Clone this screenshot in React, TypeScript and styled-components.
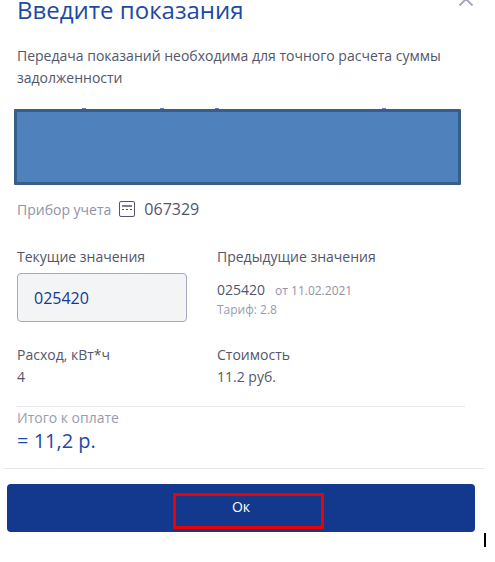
import React from "react";
import styled, { createGlobalStyle } from "styled-components";

const GlobalStyle = createGlobalStyle`
  html, body {
    margin: 0;
    padding: 0;
    background: #fff;
    overflow: hidden;
  }
  body {
    font-family: "Open Sans", "Noto Sans", sans-serif;
  }
`;

const Page = styled.div`
  position: relative;
  width: 495px;
  height: 562px;
  overflow: hidden;
`;

const Dialog = styled.div`
  display: flex;
  flex-direction: column;
  margin-top: -7px;
  width: 484px;
`;

const Header = styled.div`
  display: flex;
  justify-content: space-between;
  align-items: flex-start;
  padding: 0 10px 0 17px;
  height: 33px;
`;

const Title = styled.h1`
  margin: 0;
  font-size: 24px;
  line-height: 33px;
  font-weight: 400;
  color: #1e4aa3;
`;

const CloseButton = styled.button`
  border: 0;
  padding: 0;
  background: none;
  width: 16px;
  height: 16px;
  margin-top: -2px;
  color: #a5a9bb;
  display: flex;
`;

const Body = styled.div`
  padding: 0 19px 0 17px;
  display: flex;
  flex-direction: column;
`;

const Intro = styled.p`
  margin: 19px 0 0;
  font-size: 14px;
  line-height: 22px;
  color: #53566a;
`;

const Redaction = styled.div`
  position: relative;
  box-sizing: border-box;
  margin: 20px 0 0 -3px;
  width: 447px;
  height: 76px;
  background: #4f81bd;
  border: 3px solid #385d8a;
  border-radius: 1px;
`;

const Residue = styled.span<{ $left: number }>`
  position: absolute;
  top: -4px;
  left: ${(p) => p.$left}px;
  width: 4px;
  height: 1px;
  background: #6b7fb5;
`;

const MeterRow = styled.div`
  display: flex;
  align-items: center;
  margin-top: 14px;
  height: 20px;
`;

const MeterLabel = styled.span`
  font-size: 14px;
  color: #8f93a8;
`;

const MeterIcon = styled.svg`
  width: 16px;
  height: 16px;
  margin: 0 9px 0 8px;
  color: #53566a;
`;

const MeterNumber = styled.span`
  font-size: 16px;
  color: #53566a;
`;

const Columns = styled.div`
  display: grid;
  grid-template-columns: 200px 1fr;
`;

const ReadingsRow = styled(Columns)`
  margin-top: 28px;
`;

const UsageRow = styled(Columns)`
  margin-top: 23px;
`;

const FieldLabel = styled.div`
  font-size: 14px;
  line-height: 20px;
  color: #53566a;
`;

const FieldValue = styled.div`
  font-size: 14px;
  line-height: 22px;
  margin-top: 1px;
  color: #53566a;
`;

const ReadingBox = styled.div`
  box-sizing: border-box;
  margin-top: 6px;
  width: 170px;
  height: 49px;
  padding-left: 16px;
  display: flex;
  align-items: center;
  background: #f3f4f6;
  border: 1px solid #a5a9bb;
  border-radius: 4px;
  font-size: 16px;
  color: #14398e;
`;

const PreviousLine = styled.div`
  display: flex;
  align-items: baseline;
  margin-top: 13px;
  line-height: 20px;
`;

const PreviousValue = styled.span`
  font-size: 14px;
  color: #53566a;
`;

const PreviousDate = styled.span`
  margin-left: 10px;
  font-size: 12px;
  color: #8f93a8;
`;

const Tariff = styled.div`
  font-size: 12px;
  line-height: 17px;
  color: #989cb0;
`;

const Total = styled.div`
  margin-top: 18px;
  border-top: 1px solid #e6e7ea;
  width: 448px;
`;

const TotalLabel = styled.div`
  margin-top: 1px;
  font-size: 14px;
  line-height: 20px;
  color: #989cb0;
`;

const TotalValue = styled.div`
  font-size: 20px;
  line-height: 26px;
  color: #1e4aa3;
`;

const Footer = styled.div`
  margin: 14px 0 0 4px;
  width: 480px;
  border-top: 1px solid #e6e7ea;
  padding: 15px 0 0 3px;
  box-sizing: border-box;
`;

const OkButton = styled.button`
  position: relative;
  display: block;
  width: 468px;
  height: 48px;
  border: 0;
  border-radius: 4px;
  background: #13398e;
  color: #fff;
  font-family: inherit;
  font-size: 14px;
  padding: 0 0 3px;
`;

const Highlight = styled.span`
  position: absolute;
  left: 166px;
  top: 9px;
  width: 151px;
  height: 36px;
  box-sizing: border-box;
  border: 3px solid #f00000;
`;

const TextCursor = styled.span`
  position: absolute;
  left: 484px;
  top: 533px;
  width: 2px;
  height: 14px;
  background: #000;
`;

export default function App() {
  return (
    <Page>
      <GlobalStyle />
      <Dialog>
        <Header>
          <Title>Введите показания</Title>
          <CloseButton aria-label="Закрыть">
            <svg width="16" height="16" viewBox="0 0 16 16" fill="none" stroke="currentColor" strokeWidth="2">
              <path d="M1.5 1.5l13 13M14.5 1.5l-13 13" />
            </svg>
          </CloseButton>
        </Header>
        <Body>
          <Intro>Передача показаний необходима для точного расчета суммы задолженности</Intro>
          <Redaction>
            {[65, 143, 198, 365].map((left) => (
              <Residue key={left} $left={left} />
            ))}
          </Redaction>
          <MeterRow>
            <MeterLabel>Прибор учета</MeterLabel>
            <MeterIcon viewBox="0 0 16 16" fill="none">
              <rect x="0.5" y="0.5" width="15" height="15" rx="1.5" stroke="currentColor" />
              <path d="M3 4h10v2H3z" fill="currentColor" opacity="0.75" />
              <path d="M3 8.5h2M7 8.5h2M11 8.5h2" stroke="currentColor" strokeWidth="1.2" />
            </MeterIcon>
            <MeterNumber>067329</MeterNumber>
          </MeterRow>
          <ReadingsRow>
            <div>
              <FieldLabel>Текущие значения</FieldLabel>
              <ReadingBox>025420</ReadingBox>
            </div>
            <div>
              <FieldLabel>Предыдущие значения</FieldLabel>
              <PreviousLine>
                <PreviousValue>025420</PreviousValue>
                <PreviousDate>от 11.02.2021</PreviousDate>
              </PreviousLine>
              <Tariff>Тариф: 2.8</Tariff>
            </div>
          </ReadingsRow>
          <UsageRow>
            <div>
              <FieldLabel>Расход, кВт*ч</FieldLabel>
              <FieldValue>4</FieldValue>
            </div>
            <div>
              <FieldLabel>Стоимость</FieldLabel>
              <FieldValue>11.2 руб.</FieldValue>
            </div>
          </UsageRow>
          <Total>
            <TotalLabel>Итого к оплате</TotalLabel>
            <TotalValue>= 11,2 р.</TotalValue>
          </Total>
        </Body>
        <Footer>
          <OkButton>
            Ок
            <Highlight />
          </OkButton>
        </Footer>
      </Dialog>
      <TextCursor />
    </Page>
  );
}
